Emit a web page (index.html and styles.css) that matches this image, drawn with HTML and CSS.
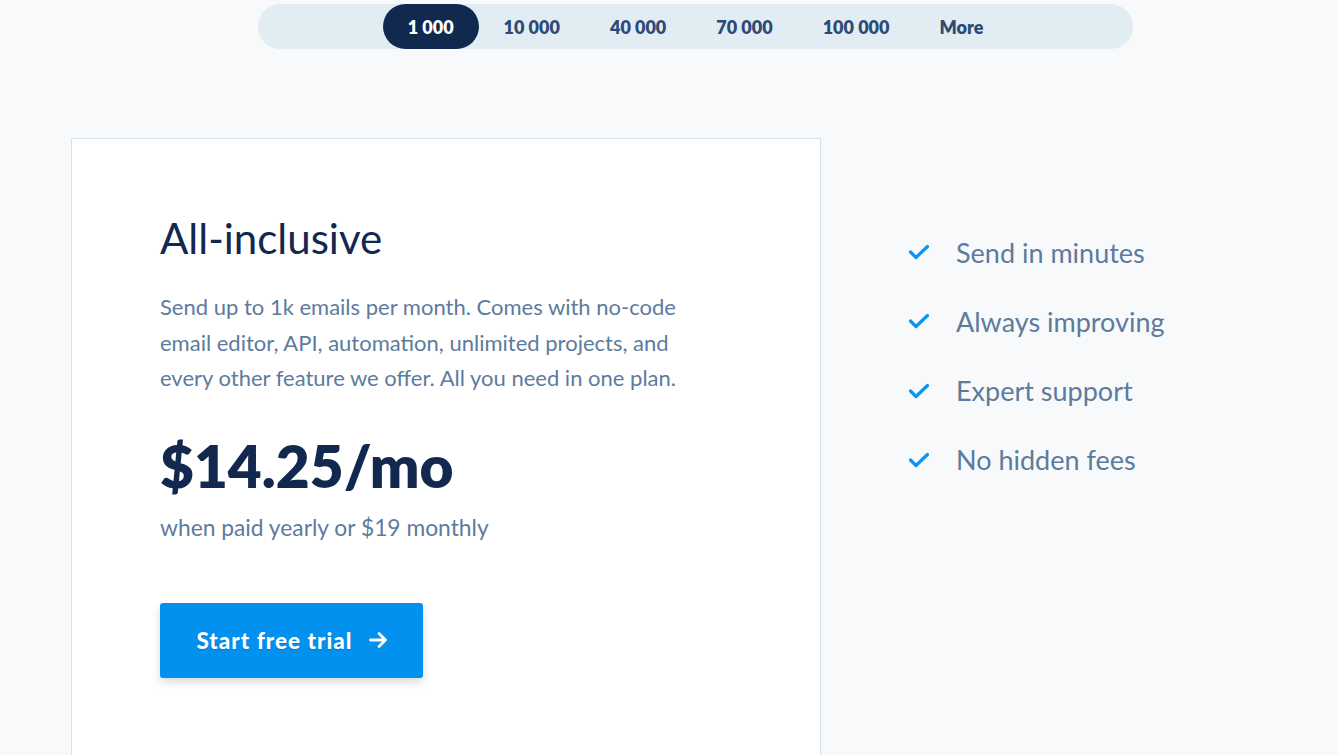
FILE: index.html
```html
<!DOCTYPE html>
<html lang="en">
<head>
<meta charset="utf-8">
<title>Pricing</title>
<link rel="stylesheet" href="styles.css">
</head>
<body>
<div class="container">
  <div class="tabs">
    <span class="tab active">1 000</span>
    <span class="tab">10 000</span>
    <span class="tab">40 000</span>
    <span class="tab">70 000</span>
    <span class="tab">100 000</span>
    <span class="tab">More</span>
  </div>
  <div class="main">
    <div class="card">
      <h2 class="title">All-inclusive</h2>
      <p class="desc">Send up to 1k emails per month. Comes with no-code email editor, API, automation, unlimited projects, and every other feature we offer. All you need in one plan.</p>
      <div class="price">$14.25/mo</div>
      <p class="note">when paid yearly or $19 monthly</p>
      <a class="btn" href="#">Start free trial
        <svg class="arrow" width="21" height="20" viewBox="0 0 21 20" fill="none" stroke="currentColor" stroke-width="2.8" stroke-linecap="round" stroke-linejoin="round"><path d="M2.5 10h15M11 3.5l6.5 6.5-6.5 6.5"/></svg>
      </a>
    </div>
    <ul class="features">
      <li><svg class="check" width="22" height="16" viewBox="0 0 22 16" fill="none" stroke="currentColor" stroke-width="3.2" stroke-linecap="round" stroke-linejoin="round"><path d="M2.5 8l5.5 5.5L19.5 2.5"/></svg>Send in minutes</li>
      <li><svg class="check" width="22" height="16" viewBox="0 0 22 16" fill="none" stroke="currentColor" stroke-width="3.2" stroke-linecap="round" stroke-linejoin="round"><path d="M2.5 8l5.5 5.5L19.5 2.5"/></svg>Always improving</li>
      <li><svg class="check" width="22" height="16" viewBox="0 0 22 16" fill="none" stroke="currentColor" stroke-width="3.2" stroke-linecap="round" stroke-linejoin="round"><path d="M2.5 8l5.5 5.5L19.5 2.5"/></svg>Expert support</li>
      <li><svg class="check" width="22" height="16" viewBox="0 0 22 16" fill="none" stroke="currentColor" stroke-width="3.2" stroke-linecap="round" stroke-linejoin="round"><path d="M2.5 8l5.5 5.5L19.5 2.5"/></svg>No hidden fees</li>
    </ul>
  </div>
</div>
</body>
</html>
```

FILE: styles.css
```css
* { box-sizing: border-box; }
html, body { margin: 0; padding: 0; }
body {
  background: #f7f9fb;
  font-family: Lato, "Open Sans", Arial, sans-serif;
  color: #12284f;
  overflow: hidden;
}
.container {
  width: 1249px;
  margin-left: 71px;
  padding-top: 4px;
}
.tabs {
  width: 875px;
  height: 45px;
  margin: 0 auto;
  background: #e1ecf3;
  border-radius: 23px;
  display: flex;
  justify-content: center;
}
.tab {
  padding: 0 25px;
  line-height: 46px;
  font-size: 18px;
  font-weight: 800;
  color: #2c4a74;
  white-space: nowrap;
}
.tab.active {
  background: #11284f;
  color: #fff;
  border-radius: 23px;
}
.main {
  display: flex;
  align-items: flex-start;
  margin-top: 89px;
}
.card {
  width: 750px;
  height: 620px;
  flex: none;
  background: #fff;
  border: 1px solid #d6e2ea;
  padding: 74px 0 0 88px;
}
.title {
  margin: 0;
  font-size: 42px;
  font-weight: 400;
  line-height: 50px;
  color: #12284f;
}
.desc {
  margin: 26px 0 0;
  width: 556px;
  font-size: 22px;
  line-height: 35.5px;
  color: #5d7b9d;
}
.price {
  margin-top: 34px;
  font-size: 58.5px;
  font-weight: 800;
  line-height: 70px;
  color: #12284f;
}
.note {
  margin: 12px 0 0;
  font-size: 22.8px;
  line-height: 30px;
  color: #5d7b9d;
}
.btn {
  margin-top: 61px;
  width: 263px;
  height: 75px;
  display: flex;
  align-items: center;
  justify-content: center;
  gap: 15px;
  padding-left: 2px;
  background: #0291ee;
  color: #fff;
  border-radius: 3px;
  text-decoration: none;
  font-size: 22.5px;
  font-weight: 900;
  letter-spacing: 1px;
  box-shadow: 0 4px 8px rgba(30, 60, 90, 0.18);
  text-shadow: 0 1px 1px rgba(0, 40, 90, 0.2);
}
.arrow { flex: none; }
.features {
  list-style: none;
  margin: 95px 0 0 87px;
  padding: 0;
}
.features li {
  display: flex;
  align-items: center;
  height: 38px;
  margin-bottom: 31.3px;
  font-size: 27px;
  color: #5d7b9d;
}
.check {
  color: #0a95f0;
  margin-right: 26px;
  flex: none;
}
```
